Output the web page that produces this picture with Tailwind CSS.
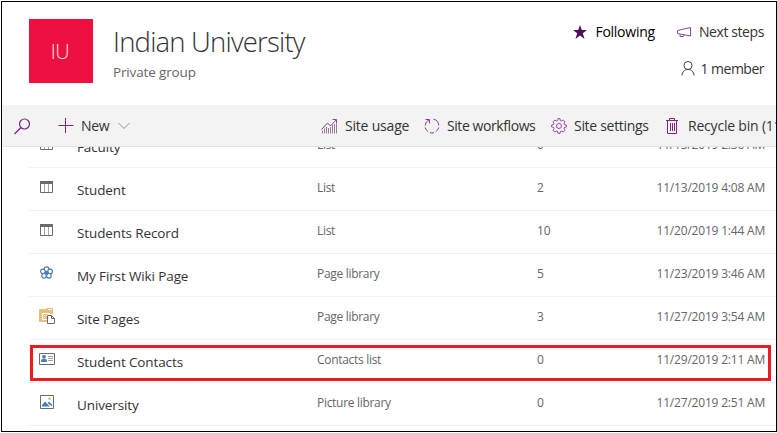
<!DOCTYPE html>
<html lang="en">
<head>
<meta charset="utf-8">
<title>Indian University</title>
<script src="https://cdn.jsdelivr.net/npm/@tailwindcss/browser@4"></script>
</head>
<body class="bg-white overflow-hidden font-['Open_Sans','Noto_Sans',sans-serif] text-[#333]">
<svg class="hidden">
  <symbol id="list" viewBox="0 0 16 16"><path fill="#6b6b6b" d="M1 2h13v3H1z"/><path fill="none" stroke="#6b6b6b" d="M1.5 3v10.5h12V3"/><path fill="none" stroke="#a5a5a5" d="M5.5 5v8M9.5 5v8"/></symbol>
  <symbol id="wiki" viewBox="0 0 16 16"><g fill="#fff" stroke="#4a7fb5" stroke-width="1.2"><circle cx="7.5" cy="4.3" r="2.5"/><circle cx="3.9" cy="6.4" r="2.3"/><circle cx="11.1" cy="6.4" r="2.3"/><circle cx="5.1" cy="10.8" r="2.3"/><circle cx="9.9" cy="10.8" r="2.3"/></g><circle cx="7.5" cy="7.8" r="2" fill="#4a7fb5"/></symbol>
  <symbol id="pages" viewBox="0 0 16 16"><path fill="#e8c07d" d="M0 1h7l1-1h6v6h-3L8 7v7H0z"/><path fill="#fff" d="M9 1h4v1H9zM3 5h8v1H3zM3 5h1v6H3zM5 7h1v1H5zM7 7h3v1H7zM5 9h1v1H5zM3 11h5v1H3z"/><path fill="#fff" stroke="#6b6b6b" d="M8.500 7.500h4l3 3v5h-7zM12.500 7.500v3h3"/></symbol>
  <symbol id="contacts" viewBox="0 0 16 16"><path fill="#fff" stroke="#6b6b6b" d="M.5 2.500h15v11H.5z"/><circle cx="5" cy="5.800" r="1.900" fill="#4a7fb5"/><path fill="#4a7fb5" d="M2 11V9.500Q2 8 4 8h2q2 0 2 1.500V11z"/><path stroke="#a0a0a0" d="M9 5.500h5M9 7.500h5M9 9.500h5"/></symbol>
  <symbol id="picture" viewBox="0 0 16 16"><path fill="#fff" stroke="#6b6b6b" d="M1.500 1.500h13v13h-13z"/><circle cx="10.500" cy="4.500" r="1.500" fill="#edc58e"/><path fill="#4a7fb5" d="M3 12.500V11l3-3.500 5 5zM8.500 9l1.500-1.500 3 3v2z"/></symbol>
</svg>
<div class="relative w-[777px] h-[433px] pl-px pt-px">
 <div class="w-[776px] h-[431px] border border-black overflow-hidden flex flex-col">
  <header class="h-[103px] shrink-0 flex pl-[27px] pt-[17px] pr-[12px]">
    <div class="size-16 bg-[#ee1040] text-white/90 text-[20px] font-light flex items-center justify-center leading-none pt-0.5 pr-0.5 tracking-[-0.4px]">IU</div>
    <div class="ml-5 whitespace-nowrap">
      <h1 class="text-[27.500px] leading-[38px] mt-[4px] font-light tracking-[-0.8px]">Indian University</h1>
      <p class="text-[13.500px] leading-5 mt-[1px] text-[#666] tracking-[-0.15px]">Private group</p>
    </div>
    <div class="ml-auto pt-px text-[14px] whitespace-nowrap flex flex-col items-end">
      <div class="flex h-6 items-center leading-6">
        <svg class="w-4 h-4 mr-[7px]" viewBox="0 0 16 16"><path fill="#4b0f5c" d="M8 1l1.800 5H15l-4.200 3.200L12.500 15 8 11.500 3.500 15l1.700-5.800L1 6h5.200z"/></svg>
        <span class="text-black tracking-[-0.25px]">Following</span>
        <svg class="w-4 h-4 ml-[21px] mr-[7px]" viewBox="0 0 16 16" fill="none" stroke="#8a4a9c"><path d="M1.500 6.500L14.500 3.500v8.500L1.500 9.500zM4 10.500v2h3.500l.5-1.300"/></svg>
        <span class="tracking-[-0.4px]">Next steps</span>
      </div>
      <div class="flex h-6 mt-[13px] items-center leading-6">
        <svg class="w-4 h-4 mr-[4px] -mt-[3px]" viewBox="0 0 16 16" fill="none" stroke="#444"><circle cx="8" cy="5.500" r="4"/><path d="M2 15.500c.3-3.700 2.500-6 6-6s5.700 2.300 6 6"/></svg>
        <span class="tracking-[-0.5px]">1 member</span>
      </div>
    </div>
  </header>
  <nav class="h-[42px] shrink-0 bg-[#f3f3f3] border-b border-[#e3e3e3] flex items-center pl-[11px] text-[14px] whitespace-nowrap">
    <svg class="shrink-0 w-[18px] h-[18px]" viewBox="0 0 18 18" fill="none" stroke="#7d2389" stroke-width="1.200"><circle cx="11.500" cy="7" r="5"/><path d="M8 10.500L1.500 17"/></svg>
    <div class="ml-[27px] w-[263px] shrink-0 flex items-center">
      <svg class="w-4 h-4 shrink-0" viewBox="0 0 16 16" stroke="#7d2389" stroke-width="1"><path d="M7.500 0v15M.500 7.500h15"/></svg>
      <span class="ml-[7px] tracking-[-0.3px]">New</span>
      <svg class="w-3 h-3 ml-[9px]" viewBox="0 0 12 12" fill="none" stroke="#8494a5"><path d="M.500 3L6 8.500 11.500 3"/></svg>
    </div>
    <div class="w-[103px] shrink-0 flex items-center">
      <svg class="w-4 h-4 shrink-0" viewBox="0 0 16 16" fill="none"><path stroke="#997a9e" d="M1.500 15.500v-3M3.500 15.500v-5M5.500 15.500V9M7.500 15.500V10M9.500 15.500V9M11.500 15.500V7M13.500 15.500V6M15.500 15.500V6"/><path stroke="#8b3b99" d="M.500 11.500L6.500 5l3 3L15 2M11.500 1.500h4v4"/></svg>
      <span class="ml-2 tracking-[-0.2px]">Site usage</span>
    </div>
    <div class="w-[127px] shrink-0 flex items-center">
      <svg class="w-4 h-4 shrink-0" viewBox="0 0 16 16" fill="none" stroke="#8b3b99"><path d="M9.500 1.200a6.800 6.800 0 0 1 5.300 6.300M14.700 9.500a7 7 0 0 1-3 4.200M10 14.700a7 7 0 0 1-4 0M4.300 13.800a7 7 0 0 1-3.200-4.300M1.200 7.500a7 7 0 0 1 4-5.800M1.500 1.500H5.500v4"/></svg>
      <span class="ml-[7px] tracking-[-0.42px]">Site workflows</span>
    </div>
    <div class="w-[114px] shrink-0 flex items-center">
      <svg class="w-4 h-4 shrink-0" viewBox="0 0 16 16" fill="none" stroke="#8b3b99" stroke-width=".9"><path d="M6.700 2.500L7 .600h2l.3 1.900 1.300.500L12.200 2l1.800 1.800-1 1.600.500 1.300 1.900.300v2l-1.900.300-.500 1.300 1 1.600-1.800 1.800-1.600-1-1.300.500L9 15.400H7l-.3-1.900-1.300-.500-1.600 1L2 12.200l1-1.600-.500-1.300L.600 9V7l1.900-.300L3 5.400 2 3.800 3.800 2l1.600 1z"/><circle cx="8" cy="8" r="2.500"/></svg>
      <span class="ml-[7px] tracking-[-0.3px]">Site settings</span>
    </div>
    <div class="shrink-0 flex items-center">
      <svg class="w-4 h-4 shrink-0" viewBox="0 0 16 16" fill="none" stroke="#7d2389"><path d="M1 2.500h12M4.500 2V.500h5V2M2.500 3v12.500h9V3M5.500 5v8M7.500 5v8M9.500 5v8" transform="translate(-.0)"/></svg>
      <span class="ml-[7px] tracking-[-0.2px]">Recycle bin (11)</span>
    </div>
  </nav>
  <main class="grow overflow-hidden pl-[27px]"><div id="rows" class="-mt-[22px]"></div></main>
 </div>
 <div class="absolute left-[30px] top-[345px] w-[741px] h-[36px] border-3 border-[#ed1c24]"></div>
</div>
<script>
const rows = [
 ['list','Faculty','List','0','11/13/2019 2:36 AM'],
 ['list','Student','List','2','11/13/2019 4:08 AM'],
 ['list','Students Record','List','10','11/20/2019 1:44 AM'],
 ['wiki','My First Wiki Page','Page library','5','11/23/2019 3:46 AM'],
 ['pages','Site Pages','Page library','3','11/27/2019 3:54 AM'],
 ['contacts','Student Contacts','Contacts list','0','11/29/2019 2:11 AM'],
 ['picture','University','Picture library','0','11/27/2019 2:51 AM'],
];
document.getElementById('rows').innerHTML = rows.map(r => `
 <div class="h-[43px] border-b border-[#f1f1f1] flex text-[12px] text-[#666] whitespace-nowrap pt-[10px] pl-[10px] pr-[11px] leading-5">
  <svg class="w-4 h-4 mt-px"><use href="#${r[0]}"/></svg>
  <span class="ml-[22px] w-[240px] pt-[2px] text-[13.500px] tracking-[-0.12px] text-[#333]">${r[1]}</span>
  <span class="w-[220px] tracking-[-0.3px]">${r[2]}</span>
  <span>${r[3]}</span>
  <span class="ml-auto tracking-[-0.2px]">${r[4]}</span>
 </div>`).join('');
</script>
</body>
</html>
